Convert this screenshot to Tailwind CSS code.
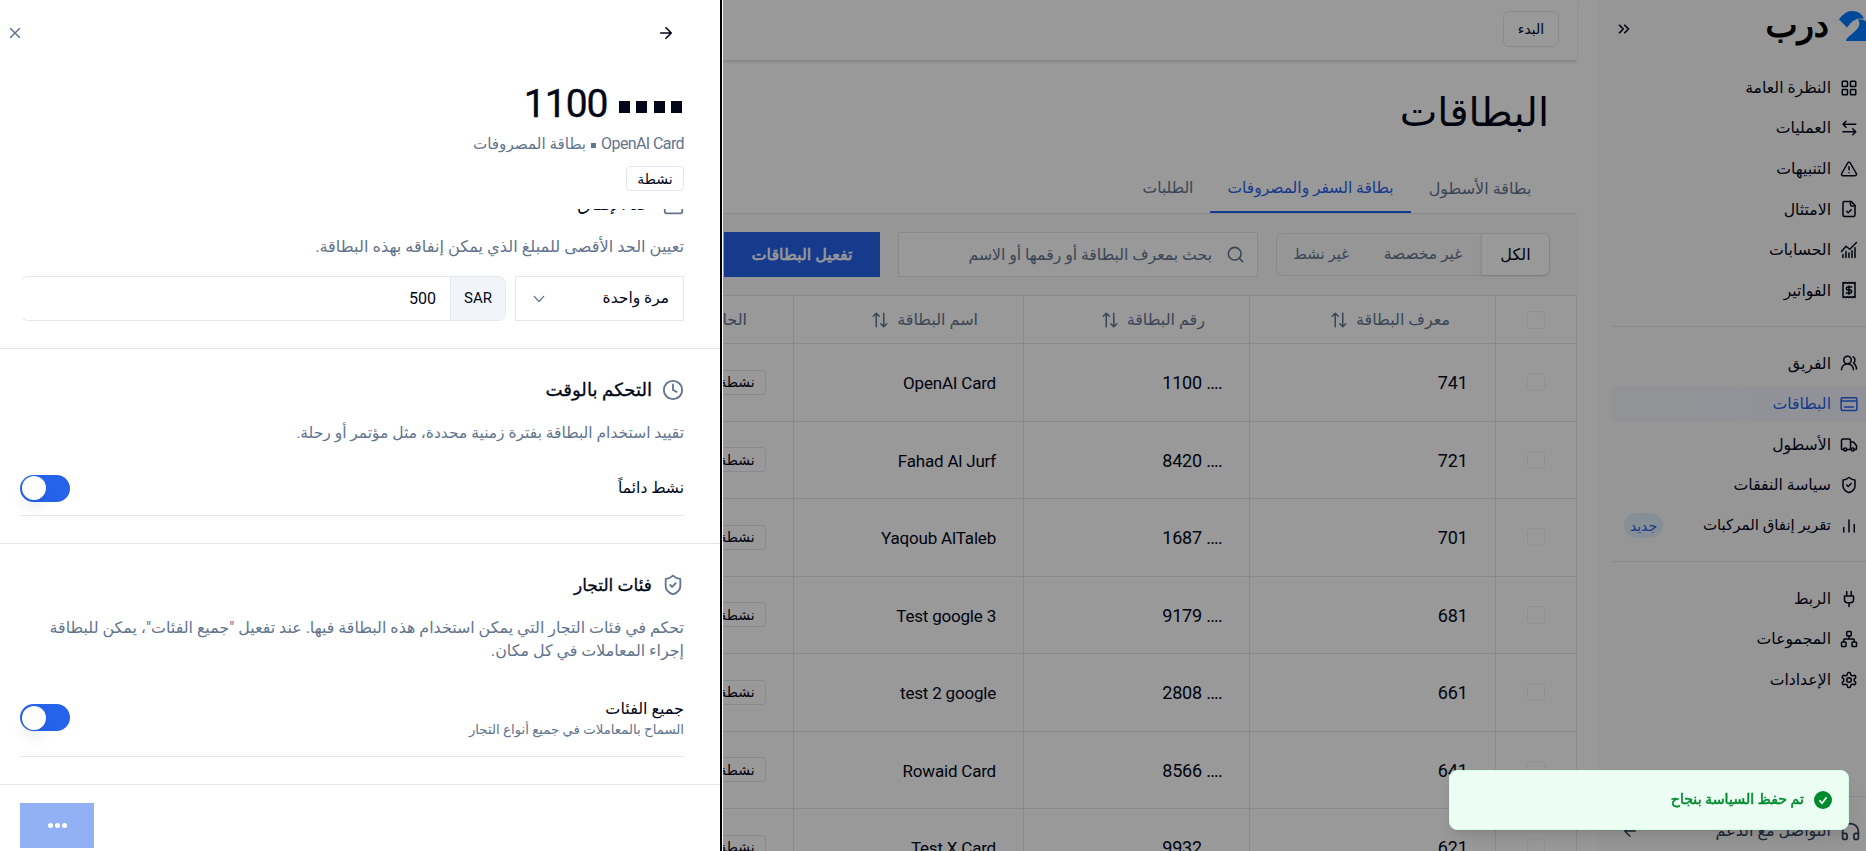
<!DOCTYPE html>
<html lang="ar" dir="rtl">
<head>
  <meta charset="UTF-8">
  <title>درب - البطاقات</title>
  <meta name="viewport" content="width=device-width, initial-scale=1.0">
  <script src="https://cdn.jsdelivr.net/npm/@tailwindcss/browser@4"></script>
</head>
<body class="h-[851px] w-[1866px] overflow-hidden bg-white font-[Roboto,'DejaVu_Sans',sans-serif] text-base text-slate-950">
  <div class="flex h-full">

    <!-- Sidebar -->
    <aside class="flex w-[269px] shrink-0 flex-col bg-[#fafafa]">
      <div class="flex h-[69.500px] items-start justify-between pl-[18px]">
        <div class="flex items-start gap-[10px] pt-[11px]">
          <svg class="h-[31px] w-[27px]" viewBox="0 0 27 31" fill="#007bff">
            <path d="M0 8.500 C4 3 8 0 13 0 C19 0 23 3 25 7.500 C18 7 14 9 11 13 L8 16.500 Z"/>
            <path d="M19 8.500 C23 8 26 9 27 11 V30 H7 C7 27 11 25 15 21 C20 17 22 13 19 8.500 Z"/>
          </svg>
          <span class="text-[34px] leading-[29px] text-black [-webkit-text-stroke:1.2px]">درب</span>
        </div>
        <svg class="mt-[20px] size-[18px]" viewBox="0 0 24 24" fill="none" stroke="currentColor" stroke-width="2.2" stroke-linecap="round" stroke-linejoin="round"><path d="m6 17 5-5-5-5M13 17l5-5-5-5"/></svg>
      </div>
      <nav id="nav" class="flex flex-col"></nav>
      <div class="mt-auto flex h-[55px] items-end border-t border-slate-200 pr-[5px] pb-2">
        <div class="flex w-full items-center text-slate-700">
          <svg class="size-[21px]" viewBox="0 0 24 24" fill="none" stroke="currentColor" stroke-width="2" stroke-linecap="round" stroke-linejoin="round"><path d="M3 14h3a2 2 0 0 1 2 2v3a2 2 0 0 1-2 2H5a2 2 0 0 1-2-2v-7a9 9 0 0 1 18 0v7a2 2 0 0 1-2 2h-1a2 2 0 0 1-2-2v-3a2 2 0 0 1 2-2h3"/></svg>
          <span class="mr-[9px]">التواصل مع الدعم</span>
          <svg class="mr-auto ml-[24px] size-[18px]" viewBox="0 0 24 24" fill="none" stroke="currentColor" stroke-width="2" stroke-linecap="round" stroke-linejoin="round"><path d="m12 19-7-7 7-7M19 12H5"/></svg>
        </div>
      </div>
    </aside>

    <!-- Cards page -->
    <main class="mr-5 w-[1000px] shrink-0">
      <header class="flex h-[61px] border-b border-slate-200 pt-[11px] pr-[18px] shadow-sm">
        <button class="flex h-[36px] w-[56px] items-center justify-center rounded-md border border-slate-200 text-sm">البدء</button>
      </header>
      <h1 class="h-[103px] pt-[25px] pr-[28px] text-[40px] leading-[54px]">البطاقات</h1>
      <div class="flex h-[50px] border-b border-slate-200 pr-[28px] text-[15.5px] text-slate-500">
        <div class="flex w-[138px] items-center justify-center text-base">بطاقة الأسطول</div>
        <div class="flex w-[201px] items-center justify-center border-b-2 border-[#2563eb] pt-[2px] text-[#2563eb]">بطاقة السفر والمصروفات</div>
        <div class="flex w-[84px] items-center justify-center">الطلبات</div>
      </div>
      <div class="flex h-[81px] items-center bg-[#fafafa] pr-[27px]">
        <div class="flex h-[43px] w-[274px] rounded-md border border-slate-200 text-slate-500">
          <div class="flex w-[68px] items-center justify-center rounded-r-md border-l border-slate-200 bg-white text-slate-950 shadow-sm">الكل</div>
          <div class="flex w-[116px] items-center justify-center text-[15.5px]">غير مخصصة</div>
          <div class="flex flex-1 items-center justify-center text-[15px]">غير نشط</div>
        </div>
        <div class="mr-[18px] flex h-[45px] w-[360px] items-center border border-slate-200 bg-white pr-[12px] text-slate-500">
          <svg class="size-[19px]" viewBox="0 0 24 24" fill="none" stroke="currentColor" stroke-width="2" stroke-linecap="round" stroke-linejoin="round"><circle cx="11" cy="11" r="8"/><path d="m21 21-4.3-4.3"/></svg>
          <span class="mr-[14px] text-[15.700px] whitespace-nowrap">بحث بمعرف البطاقة أو رقمها أو الاسم</span>
        </div>
        <button class="mr-[18px] h-[45px] w-[156px] bg-[#2563eb] text-white [-webkit-text-stroke:0.5px]">تفعيل البطاقات</button>
      </div>
      <div id="table" class="border-t border-r border-slate-200"></div>
    </main>
  </div>

  <div class="fixed inset-0 bg-black/40"></div>

  <!-- Card drawer -->
  <section class="fixed inset-y-0 left-0 flex w-[723px] flex-col border-r border-white bg-white">
    <div class="absolute inset-y-0 right-0 w-[2px] bg-black"></div>
    <div class="h-[209px] shrink-0 pr-[38px]">
      <div class="flex h-[66px] items-center justify-between pr-[9px] pl-[6px]">
        <svg class="size-[18px]" viewBox="0 0 24 24" fill="none" stroke="currentColor" stroke-width="2.2" stroke-linecap="round" stroke-linejoin="round"><path d="M5 12h14M12 5l7 7-7 7"/></svg>
        <svg class="size-[18px] text-slate-500" viewBox="0 0 24 24" fill="none" stroke="currentColor" stroke-width="2" stroke-linecap="round" stroke-linejoin="round"><path d="M18 6 6 18M6 6l12 12"/></svg>
      </div>
      <div class="mt-[14px] flex h-[48px] items-center gap-[11px]">
        <div class="flex gap-[6.500px] pt-[5px] pr-[2px]">
          <i class="h-3 w-[11px] bg-slate-950"></i><i class="h-3 w-[11px] bg-slate-950"></i><i class="h-3 w-[11px] bg-slate-950"></i><i class="h-3 w-[11px] bg-slate-950"></i>
        </div>
        <span class="text-[39px] tracking-[-1px] [-webkit-text-stroke:0.4px]">1100</span>
      </div>
      <p class="mt-[4px] flex items-center gap-[5px] leading-6 text-slate-500"><bdi class="tracking-[-0.600px]">OpenAI Card</bdi><i class="mt-[3px] size-[5px] bg-slate-500"></i><span class="text-[15.200px]">بطاقة المصروفات</span></p>
      <span class="mt-[10px] flex h-[25px] w-[58px] items-center justify-center rounded border border-slate-200 text-sm">نشطة</span>
    </div>

    <div class="h-[576px] shrink-0 overflow-hidden">
      <div class="flex h-[140px] flex-col border-b border-slate-200 pr-[38px] pl-5">
        <div class="-mt-[19px] flex h-[28px] shrink-0 items-center gap-[12px]">
          <svg class="size-[21px] text-slate-500" viewBox="0 0 24 24" fill="none" stroke="currentColor" stroke-width="2"><rect x="2" y="4" width="20" height="18" rx="2"/></svg>
          <h2 class="text-lg">حد الإنفاق</h2>
        </div>
        <p class="mt-[17px] text-[16.200px] leading-6 text-slate-500">تعيين الحد الأقصى للمبلغ الذي يمكن إنفاقه بهذه البطاقة.</p>
        <div class="mt-[17px] flex h-[45px] shrink-0 gap-[9px]">
          <div class="flex w-[169px] items-center justify-between border border-slate-200 pr-[14px] pl-[15px]">
            <span class="text-[15.5px]">مرة واحدة</span>
            <svg class="size-4 text-slate-500" viewBox="0 0 24 24" fill="none" stroke="currentColor" stroke-width="2" stroke-linecap="round" stroke-linejoin="round"><path d="m5 8 7 8 7-8"/></svg>
          </div>
          <div class="flex flex-1 overflow-hidden rounded-lg border border-slate-200 border-l-transparent">
            <span class="flex w-[55px] items-center justify-center border-l border-slate-200 bg-slate-100 text-[15px]">SAR</span>
            <span class="flex items-center pr-[14px]">500</span>
          </div>
        </div>
      </div>

      <div class="h-[195px] border-b border-slate-200 pr-[38px] pl-5">
        <div class="flex items-center gap-[10px] pt-[27px]">
          <svg class="size-[22px] text-slate-500" viewBox="0 0 24 24" fill="none" stroke="currentColor" stroke-width="2" stroke-linecap="round" stroke-linejoin="round"><circle cx="12" cy="12" r="10"/><path d="M12 6v6l4 2"/></svg>
          <h2 class="text-[18.200px] leading-7 [-webkit-text-stroke:0.3px]">التحكم بالوقت</h2>
        </div>
        <p class="mt-[17px] text-[15.500px] leading-6 text-slate-500">تقييد استخدام البطاقة بفترة زمنية محددة، مثل مؤتمر أو رحلة.</p>
        <div class="mt-[16px] flex h-[55px] items-center justify-between border-b border-slate-200">
          <span class="pt-[2px] text-[15.5px]">نشط دائماً</span>
          <div class="flex h-[27px] w-[50px] items-center justify-end rounded-full bg-[#2563eb] pl-[2px]"><i class="size-6 rounded-full bg-white shadow-lg"></i></div>
        </div>
      </div>

      <div class="h-[241px] border-b border-slate-200 pr-[38px] pl-5">
        <div class="flex items-center gap-[10px] pt-[27px]">
          <svg class="size-[22px] text-slate-500" viewBox="0 0 24 24" fill="none" stroke="currentColor" stroke-width="2" stroke-linecap="round" stroke-linejoin="round"><path d="M20 13c0 5-3.500 7.500-7.660 8.950a1 1 0 0 1-.67-.010C7.500 20.500 4 18 4 13V6a1 1 0 0 1 1-1c2 0 4.500-1.200 6.240-2.720a1.170 1.170 0 0 1 1.520 0C14.510 3.810 17 5 19 5a1 1 0 0 1 1 1z"/><path d="m9 12 2 2 4-4"/></svg>
          <h2 class="text-[17px] leading-7 [-webkit-text-stroke:0.3px]">فئات التجار</h2>
        </div>
        <p class="mt-[17px] text-[15.900px] leading-[23px] whitespace-nowrap text-slate-500">تحكم في فئات التجار التي يمكن استخدام هذه البطاقة فيها. عند تفعيل "جميع الفئات"، يمكن للبطاقة<br>إجراء المعاملات في كل مكان.</p>
        <div class="mt-[17px] flex h-[78px] items-center justify-between border-b border-slate-200">
          <div class="pt-[2px]">
            <div class="leading-[21px]">جميع الفئات</div>
            <div class="text-[13.300px] leading-[21px] text-slate-500">السماح بالمعاملات في جميع أنواع التجار</div>
          </div>
          <div class="flex h-[27px] w-[50px] items-center justify-end rounded-full bg-[#2563eb] pl-[2px]"><i class="size-6 rounded-full bg-white shadow-lg"></i></div>
        </div>
      </div>
    </div>

    <div class="flex justify-end pt-[18px] pl-5">
      <button class="flex h-[45px] w-[74px] items-center justify-center gap-[2px] bg-[#2563eb]/50">
        <i class="size-[5px] rounded-full bg-white"></i><i class="size-[5px] rounded-full bg-white"></i><i class="size-[5px] rounded-full bg-white"></i>
      </button>
    </div>
  </section>

  <!-- Toast -->
  <div class="fixed right-[17px] bottom-[21px] flex h-[60px] w-[400px] items-center gap-[10px] rounded-lg border border-[#d3fde5] bg-[#ecfdf3] pr-[16px] text-[#008a2e] shadow-lg">
    <svg class="size-[18px]" viewBox="0 0 20 20"><circle cx="10" cy="10" r="10" fill="currentColor"/><path d="m6 10.500 3 3 5-6.500" fill="none" stroke="#ecfdf3" stroke-width="2"/></svg>
    <span class="text-[14.200px] [-webkit-text-stroke:0.5px]">تم حفظ السياسة بنجاح</span>
  </div>

  <script>
    const items = [
      { name: "النظرة العامة", icon: '<rect x="3" y="3" width="7" height="7" rx="1"/><rect x="14" y="3" width="7" height="7" rx="1"/><rect x="14" y="14" width="7" height="7" rx="1"/><rect x="3" y="14" width="7" height="7" rx="1"/>' },
      { name: "العمليات", icon: '<path d="M21 7H4M8 3 4 7l4 4M4 17h17M17 13l4 4-4 4"/>' },
      { name: "التنبيهات", icon: '<path d="m21.730 18-8-14a2 2 0 0 0-3.480 0l-8 14A2 2 0 0 0 4 21h16a2 2 0 0 0 1.730-3M12 9v4M12 17h.010"/>' },
      { name: "الامتثال", icon: '<path d="M15 2H6a2 2 0 0 0-2 2v16a2 2 0 0 0 2 2h12a2 2 0 0 0 2-2V7Z"/><path d="M14 2v4a2 2 0 0 0 2 2h4M9 15l2 2 4-4"/>' },
      { name: "الحسابات", icon: '<path d="M2 14 8 7l5 4 9-9M4 18v4M8 14v8M12 16v6M16 13v9M20 9v13"/>' },
      { name: "الفواتير", icon: '<path d="M4 2v20l2-1 2 1 2-1 2 1 2-1 2 1 2-1 2 1V2l-2 1-2-1-2 1-2-1-2 1-2-1-2 1Z"/><path d="M15.500 8H10.500a2 2 0 0 0 0 4h3a2 2 0 0 1 0 4H8.500M12 17.500V6.500"/>' },
      null,
      { name: "الفريق", icon: '<path d="M18 21a8 8 0 0 0-16 0"/><circle cx="10" cy="8" r="5"/><path d="M22 20c0-3.370-2-6.500-4-8a5 5 0 0 0-.450-8.300"/>' },
      { name: "البطاقات", active: true, icon: '<rect x="1.500" y="3.500" width="21" height="17" rx="2"/><path d="M2 8h20M6 16h12"/>' },
      { name: "الأسطول", icon: '<path d="M14 18V6a2 2 0 0 0-2-2H4a2 2 0 0 0-2 2v11a1 1 0 0 0 1 1h2M15 18H9M19 18h2a1 1 0 0 0 1-1v-3.650a1 1 0 0 0-.220-.624l-3.480-4.350A1 1 0 0 0 17.520 8H14"/><circle cx="17" cy="18" r="2"/><circle cx="7" cy="18" r="2"/>' },
      { name: "سياسة النفقات", icon: '<path d="M20 13c0 5-3.500 7.500-7.660 8.950a1 1 0 0 1-.67-.010C7.500 20.500 4 18 4 13V6a1 1 0 0 1 1-1c2 0 4.500-1.200 6.240-2.720a1.170 1.170 0 0 1 1.520 0C14.510 3.810 17 5 19 5a1 1 0 0 1 1 1z"/><path d="m9 12 2 2 4-4"/>' },
      { name: "تقرير إنفاق المركبات", tag: "جديد", icon: '<path d="M19 20V10M12 20V4M5 20v-6"/>' },
      null,
      { name: "الربط", icon: '<path d="M12 22v-5M9 8V2M15 8V2M18 8v5a4 4 0 0 1-4 4h-4a4 4 0 0 1-4-4V8Z"/>' },
      { name: "المجموعات", icon: '<rect x="16" y="16" width="6" height="6" rx="1"/><rect x="2" y="16" width="6" height="6" rx="1"/><rect x="9" y="2" width="6" height="6" rx="1"/><path d="M5 16v-3a1 1 0 0 1 1-1h12a1 1 0 0 1 1 1v3M12 12V8"/>' },
      { name: "الإعدادات", icon: '<path d="M12.220 2h-.440a2 2 0 0 0-2 2v.180a2 2 0 0 1-1 1.730l-.430.250a2 2 0 0 1-2 0l-.150-.080a2 2 0 0 0-2.730.730l-.220.380a2 2 0 0 0 .730 2.730l.150.100a2 2 0 0 1 1 1.720v.510a2 2 0 0 1-1 1.740l-.150.090a2 2 0 0 0-.730 2.730l.220.380a2 2 0 0 0 2.730.730l.150-.080a2 2 0 0 1 2 0l.430.250a2 2 0 0 1 1 1.730V20a2 2 0 0 0 2 2h.440a2 2 0 0 0 2-2v-.180a2 2 0 0 1 1-1.730l.430-.250a2 2 0 0 1 2 0l.150.080a2 2 0 0 0 2.730-.730l.220-.390a2 2 0 0 0-.730-2.730l-.150-.080a2 2 0 0 1-1-1.740v-.500a2 2 0 0 1 1-1.740l.150-.090a2 2 0 0 0 .730-2.730l-.220-.380a2 2 0 0 0-2.730-.730l-.150.080a2 2 0 0 1-2 0l-.430-.250a2 2 0 0 1-1-1.730V4a2 2 0 0 0-2-2z"/><circle cx="12" cy="12" r="3"/>' }
    ];

    document.getElementById("nav").innerHTML = items.map(item => {
      if (!item) return '<div class="mt-[13px] mb-[18.300px] ml-[14px] border-t border-slate-200"></div>';
      return `
        <div class="mb-[4.600px] ml-[14px] flex h-9 items-center rounded-l-md pr-2 ${item.active ? 'bg-linear-to-l from-[#f0f3fd] to-[#f4f6fc] text-[#2563eb]' : ''}">
          <svg class="size-[18px]" viewBox="0 0 24 24" fill="none" stroke="currentColor" stroke-width="2" stroke-linecap="round" stroke-linejoin="round">${item.icon}</svg>
          <span class="mr-[9px] whitespace-nowrap ${item.tag ? 'text-[15px]' : 'text-[15.700px]'}">${item.name}</span>
          ${item.tag ? `<span class="mr-auto ml-[13px] flex h-[25px] w-[39px] items-center justify-center rounded-full bg-[#e0edfb] text-sm text-[#2563eb]">${item.tag}</span>` : ''}
        </div>`;
    }).join("");

    const cards = [
      ["741", "1100", "OpenAI Card"],
      ["721", "8420", "Fahad Al Jurf"],
      ["701", "1687", "Yaqoub AlTaleb"],
      ["681", "9179", "Test google 3"],
      ["661", "2808", "test 2 google"],
      ["641", "8566", "Rowaid Card"],
      ["621", "9932", "Test X Card"]
    ];
    const sort = '<svg class="mr-[8px] size-[18px]" viewBox="0 0 24 24" fill="none" stroke="currentColor" stroke-width="2" stroke-linecap="round" stroke-linejoin="round"><path d="M17 3v18M21 17l-4 4-4-4M7 21V3M3 7l4-4 4 4"/></svg>';
    const box = '<i class="size-[18px] rounded border border-[#eef1f5]"></i>';

    document.getElementById("table").innerHTML = `
      <div class="flex h-[48px] border-b border-slate-200 text-slate-500">
        <div class="flex w-[81px] items-center justify-center border-l border-slate-200">${box}</div>
        <div class="flex w-[246px] items-center border-l border-slate-200 pr-[45px]"><span>معرف البطاقة</span>${sort}</div>
        <div class="flex w-[226px] items-center border-l border-slate-200 pr-[44px]"><span>رقم البطاقة</span>${sort}</div>
        <div class="flex w-[230px] items-center border-l border-slate-200 pr-[45px]"><span>اسم البطاقة</span>${sort}</div>
        <div class="flex flex-1 items-center pr-[46px]"><span>الحالة</span></div>
      </div>` + cards.map(([id, number, name]) => `
      <div class="flex h-[77.500px] border-b border-slate-200 text-lg">
        <div class="flex w-[81px] items-center justify-center border-l border-slate-200">${box}</div>
        <div class="flex w-[246px] items-center border-l border-slate-200 pt-0.5 pr-[27px]">${id}</div>
        <div class="flex w-[226px] items-center border-l border-slate-200 pt-0.5 pr-[27px]"><span dir="ltr" class="tracking-[-0.2px]">${number} <span class="tracking-[-0.800px]">....</span></span></div>
        <div class="flex w-[230px] items-center border-l border-slate-200 pt-0.5 pr-[27px] text-[17px] tracking-[-0.200px]">${name}</div>
        <div class="flex flex-1 items-center pr-[27px]"><span class="flex h-[25px] w-[58px] items-center justify-center rounded border border-slate-200 text-sm">نشطة</span></div>
      </div>`).join("");
  </script>
</body>
</html>
